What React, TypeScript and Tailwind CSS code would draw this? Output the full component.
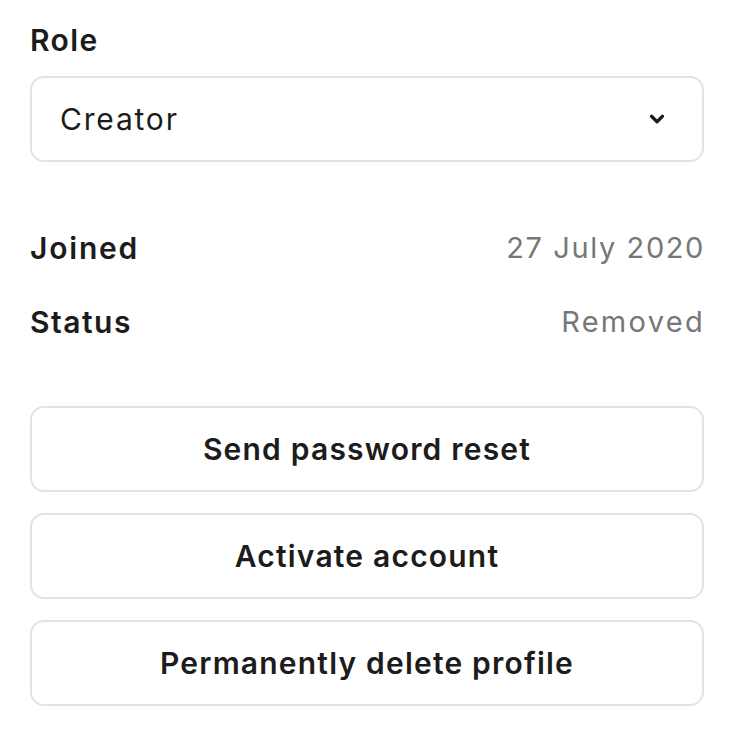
import { ChevronDown } from "lucide-react";

const font = { fontFamily: "Inter, 'Liberation Sans', sans-serif" };

function ActionButton({ label }: { label: string }) {
  return (
    <button className="flex h-[86px] w-full items-center justify-center rounded-[14px] border-2 border-[#e3e3e3] bg-white text-[30px] font-semibold tracking-[1.2px] text-[#1c1c1c]">
      {label}
    </button>
  );
}

export default function App() {
  return (
    <div className="min-h-[734px] w-[734px] bg-white px-[30px] pt-[20px]" style={font}>
      <div className="text-[30px] font-semibold leading-[40px] tracking-[1.4px] text-[#1c1c1c]">Role</div>
      <div className="mt-[16px] flex h-[86px] items-center justify-between rounded-[14px] border-2 border-[#e3e3e3] pl-[28px] pr-[34px]">
        <span className="text-[30px] tracking-[1.8px] text-[#1c1c1c]">Creator</span>
        <ChevronDown className="h-[22px] w-[22px] text-[#1c1c1c]" strokeWidth={3.5} />
      </div>

      <div className="mt-[66px] flex flex-col gap-[34px]">
        <div className="flex items-center justify-between leading-[40px]">
          <span className="text-[30px] font-semibold tracking-[1.8px] text-[#1c1c1c]">Joined</span>
          <span className="mr-[-1px] text-[29px] tracking-[1.6px] text-[#777777]">27 July 2020</span>
        </div>
        <div className="flex items-center justify-between leading-[40px]">
          <span className="text-[30px] font-semibold tracking-[1.5px] text-[#1c1c1c]">Status</span>
          <span className="mr-[-1px] text-[29px] tracking-[2.3px] text-[#777777]">Removed</span>
        </div>
      </div>

      <div className="mt-[64px] flex flex-col gap-[21px]">
        <ActionButton label="Send password reset" />
        <ActionButton label="Activate account" />
        <ActionButton label="Permanently delete profile" />
      </div>
    </div>
  );
}
